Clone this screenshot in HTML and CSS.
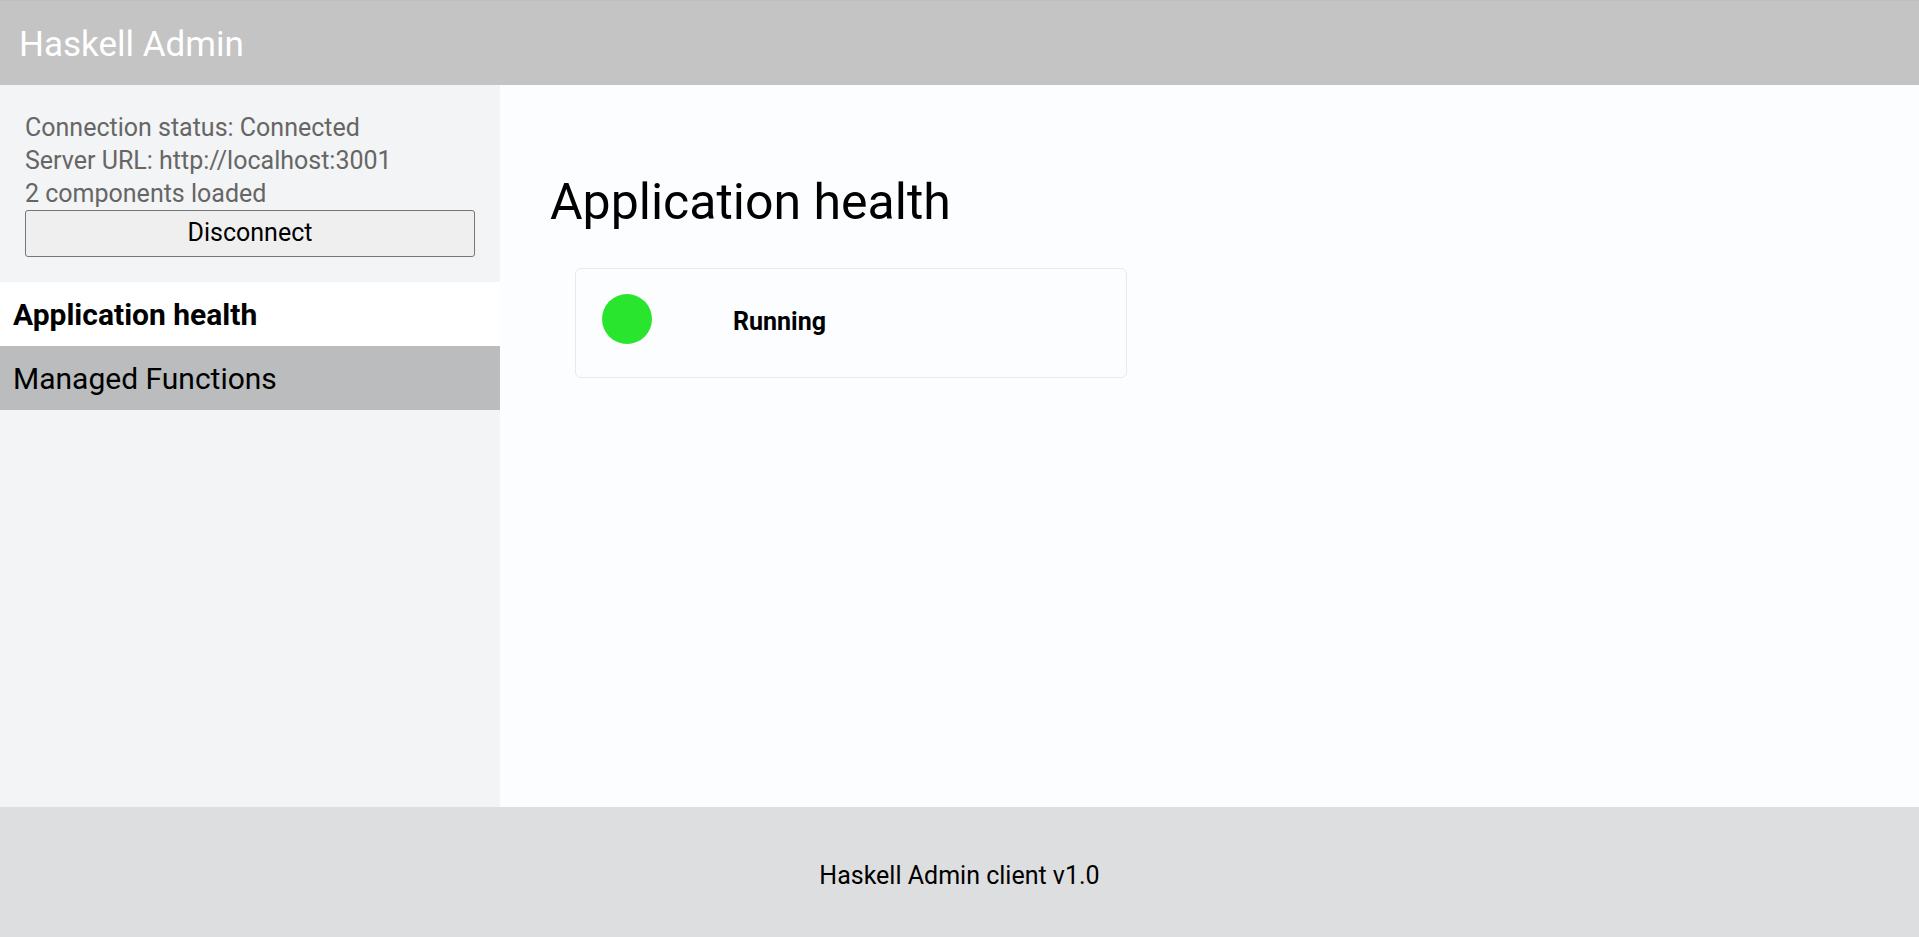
FILE: index.html
```html
<!DOCTYPE html>
<html lang="en">
<head>
<meta charset="utf-8">
<title>Haskell Admin</title>
<link rel="stylesheet" href="styles.css">
</head>
<body>
<div class="app">
  <header class="topbar">Haskell Admin</header>
  <div class="middle">
    <aside class="sidebar">
      <div class="conn">
        <div class="conn-line">Connection status: Connected</div>
        <div class="conn-line">Server URL: http://localhost:3001</div>
        <div class="conn-line">2 components loaded</div>
        <button class="disconnect">Disconnect</button>
      </div>
      <nav class="nav">
        <div class="nav-item active">Application health</div>
        <div class="nav-item">Managed Functions</div>
      </nav>
    </aside>
    <main class="main">
      <h1 class="title">Application health</h1>
      <div class="card">
        <div class="dot"></div>
        <div class="status">Running</div>
      </div>
    </main>
  </div>
  <footer class="footer">Haskell Admin client v1.0</footer>
</div>
</body>
</html>
```
FILE: styles.css
```css
html, body {
  margin: 0;
  padding: 0;
  height: 100%;
}
body {
  font-family: Roboto, "Liberation Sans", sans-serif;
  color: #000;
}
.app {
  display: flex;
  flex-direction: column;
  height: 937px;
}
.topbar {
  height: 85px;
  flex: 0 0 85px;
  box-sizing: border-box;
  background: #c3c4c3;
  border-top: 1px solid #bcc0c2;
  color: #fff;
  font-size: 35px;
  display: flex;
  align-items: center;
  padding: 2px 0 0 19px;
}
.middle {
  flex: 1 1 auto;
  display: flex;
  min-height: 0;
}
.sidebar {
  width: 500px;
  flex: 0 0 500px;
  background: #f3f4f5;
}
.conn {
  padding: 26px 25px 25px 25px;
}
.conn-line {
  font-size: 25px;
  line-height: 33px;
  color: #666666;
}
.disconnect {
  display: block;
  width: 100%;
  height: 47px;
  margin: 0;
  background: #efefef;
  border: 1px solid #767676;
  border-radius: 3px;
  font-family: Roboto, "Liberation Sans", sans-serif;
  font-size: 25px;
  color: #000;
  padding: 0 0 2px 0;
}
.nav-item {
  height: 64px;
  display: flex;
  align-items: center;
  padding-left: 13px;
  font-size: 30px;
  background: #bbbcbd;
}
.nav-item.active {
  background: #ffffff;
  font-weight: 700;
}
.main {
  flex: 1 1 auto;
  background: #fcfdff;
  padding: 53px 0 0 50px;
}
.title {
  font-size: 50px;
  font-weight: 400;
  line-height: 60px;
  margin: 34px 0 36px 0;
}
.card {
  margin-left: 25px;
  width: 552px;
  height: 110px;
  box-sizing: border-box;
  border: 1px solid #e8e9eb;
  border-radius: 6px;
  padding: 25px 26px 33px 26px;
  display: flex;
  align-items: center;
  gap: 81px;
}
.dot {
  width: 50px;
  height: 50px;
  border-radius: 50%;
  background: #2ae52e;
  flex: 0 0 50px;
}
.status {
  font-size: 25px;
  font-weight: 700;
  padding-top: 4px;
}
.footer {
  flex: 0 0 130px;
  height: 130px;
  background: #dddedf;
  display: flex;
  align-items: center;
  justify-content: center;
  font-size: 25px;
  padding-top: 6px;
  box-sizing: border-box;
}
```
